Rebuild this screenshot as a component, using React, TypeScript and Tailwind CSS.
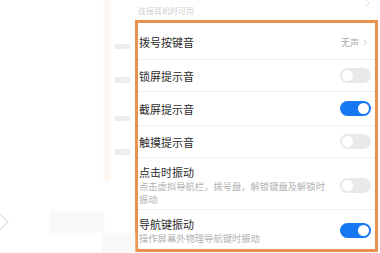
import React from "react";

const FONT = '"Noto Sans CJK SC", "Noto Sans", sans-serif';

type Row = {
  title: string;
  sub?: string;
  kind: "value" | "on" | "off";
  h: string;
};

const rows: Row[] = [
  { title: "拨号按键音", kind: "value", h: "h-[37px] pt-[2px]" },
  { title: "锁屏提示音", kind: "off", h: "h-[32px]" },
  { title: "截屏提示音", kind: "on", h: "h-[34px]" },
  { title: "触摸提示音", kind: "off", h: "h-[32px]" },
  {
    title: "点击时振动",
    sub: "点击虚拟导航栏，拨号盘，解锁键盘及解锁时振动",
    kind: "off",
    h: "h-[52px] pt-[3px]",
  },
  { title: "导航键振动", sub: "操作屏幕外物理导航键时振动", kind: "on", h: "h-[39px] pt-[2px]" },
];

function Toggle({ on }: { on: boolean }) {
  return (
    <div
      className={`w-[31px] h-[15px] rounded-full flex items-center px-[2px] ${
        on ? "bg-[#1677f2] justify-end" : "bg-[#e9e9e9] justify-start"
      }`}
    >
      <div className="w-[11px] h-[11px] rounded-full bg-white" />
    </div>
  );
}

function Chevron({ className }: { className?: string }) {
  return (
    <svg viewBox="0 0 6 10" className={className} fill="none">
      <path d="M1 1l4 4-4 4" stroke="currentColor" strokeWidth="1" />
    </svg>
  );
}

export default function App() {
  return (
    <div
      className="w-[380px] h-[253px] bg-white flex overflow-hidden relative"
      style={{ fontFamily: FONT }}
    >
      {/* blurred left side */}
      <div className="w-[104px] flex flex-col justify-end pb-[20px]">
        <div className="flex items-center gap-[40px]">
          <svg viewBox="0 0 10 24" className="w-[10px] h-[22px] text-[#e4e4e4]" fill="none">
            <path d="M-2 2l10 10-10 10" stroke="currentColor" strokeWidth="1.5" />
          </svg>
          <div className="w-[54px] h-[22px] bg-[#f8f8f8] blur-[1px]" />
        </div>
      </div>
      <div className="w-[6px] h-[180px] bg-[#fdf4ee] blur-[1px]" />

      {/* icon column */}
      <div className="w-[25px] flex flex-col items-center pt-[44px] gap-[28px]">
        <div className="w-[15px] h-[6px] bg-[#ededed] blur-[0.5px]" />
        <div className="w-[15px] h-[6px] bg-[#ededed] blur-[0.5px]" />
        <div className="w-[15px] h-[6px] bg-[#ededed] blur-[0.5px] mt-[5px]" />
        <div className="w-[15px] h-[6px] bg-[#ededed] blur-[0.5px]" />
        <div className="w-[33px] h-[22px] bg-[#f8f8f8] blur-[1px] mt-[50px] -ml-[8px]" />
      </div>

      <div className="w-[243px] flex flex-col">
        <div className="h-[20px] flex items-start justify-between pl-[3px] pr-[8px]">
          <span className="text-[8px] leading-none text-[#cfcfcf] mt-[7px]">连接耳机时可用</span>
          <Chevron className="w-[5px] h-[8px] text-[#d6d6d6] -mt-[1px]" />
        </div>
        <div className="h-[232px] border-[3px] border-[#e9924d] flex flex-col bg-white">
          {rows.map((r, i) => (
            <div
              key={r.title}
              className={`${r.h} flex items-center pl-[1px] pr-[4px] ${
                i < rows.length - 1 ? "border-b border-[#f0f0f0]" : ""
              }`}
            >
              <div className="flex-1 flex flex-col">
                <span className="text-[11px] leading-[14px] text-[#2b2b2b]">{r.title}</span>
                {r.sub && (
                  <span className="text-[9.3px] leading-[13px] text-[#b2b2b2] w-[190px] mt-[1px]">
                    {r.sub}
                  </span>
                )}
              </div>
              {r.kind === "value" ? (
                <div className="flex items-center gap-[4px] text-[#a9a9a9] pr-[4px]">
                  <span className="text-[9px] leading-none">无声</span>
                  <Chevron className="w-[4px] h-[7px]" />
                </div>
              ) : (
                <Toggle on={r.kind === "on"} />
              )}
            </div>
          ))}
        </div>
      </div>
    </div>
  );
}
